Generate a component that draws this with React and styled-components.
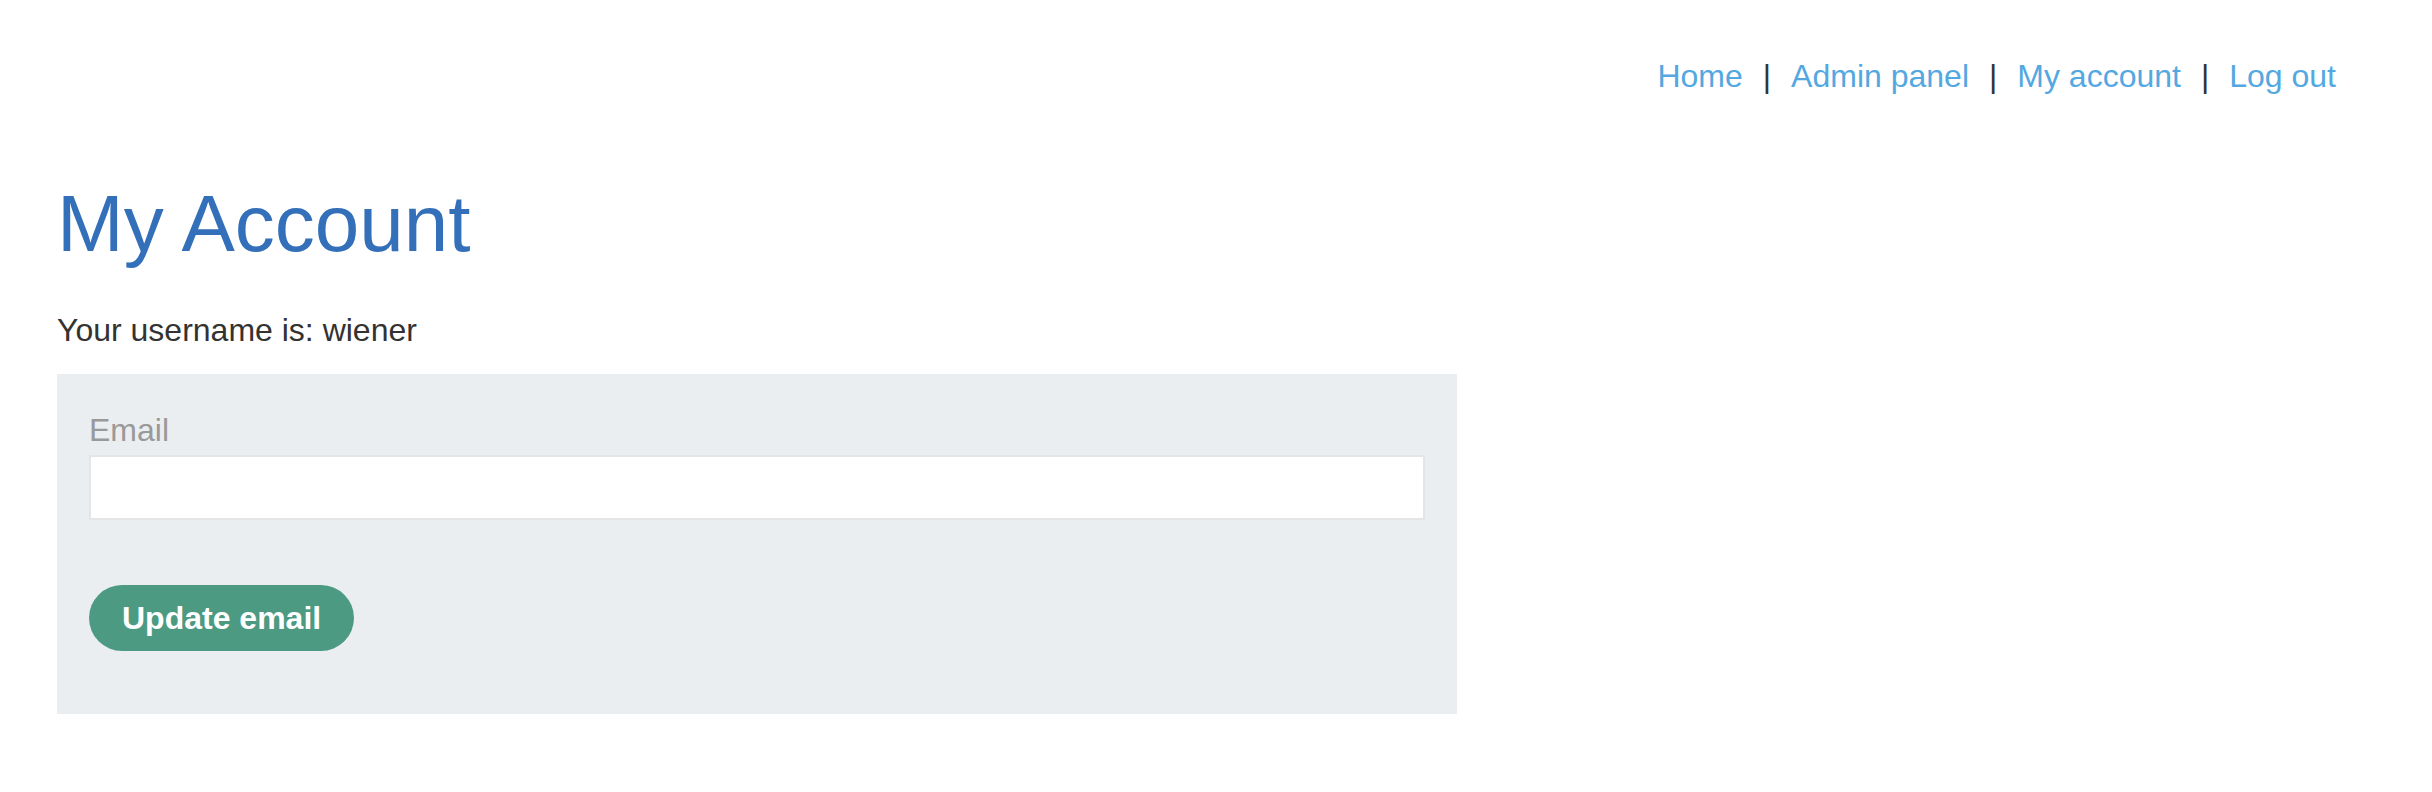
import styled, { createGlobalStyle } from "styled-components";

const GlobalStyle = createGlobalStyle`
    body {
        margin: 0;
        background: #fff;
        font-family: "Liberation Sans", Arial, sans-serif;
        color: #333332;
    }
`

const Page = styled.div`
    padding: 58px 96px 80px 57px;
`

const Nav = styled.nav`
    display: flex;
    justify-content: flex-end;
    align-items: baseline;
    font-size: 32px;
    line-height: 1.15;
`

const NavLink = styled.a`
    color: #54a8e2;
    text-decoration: none;
`

const Sep = styled.span`
    color: #333332;
    margin: 0 20px;
`

const Title = styled.h1`
    margin: 89px 0 0;
    font-size: 80px;
    line-height: 1;
    font-weight: 400;
    color: #3370b9;
`

const Info = styled.p`
    margin: 48px 0 0;
    font-size: 32px;
    line-height: 1.15;
`

const Form = styled.form`
    box-sizing: border-box;
    width: 1400px;
    margin: 25px 0 0;
    padding: 38px 32px 63px 32px;
    background: #ebeef1;
    display: flex;
    flex-direction: column;
    align-items: flex-start;
`

const Label = styled.label`
    font-size: 32px;
    line-height: 1.15;
    color: #999999;
`

const Input = styled.input`
    box-sizing: border-box;
    width: 100%;
    height: 65px;
    margin-top: 7px;
    border: 2px solid #e4e5e6;
    background: #fff;
    font-size: 32px;
    padding: 0 12px;
    outline: none;
`

const Button = styled.button`
    margin-top: 65px;
    height: 66px;
    padding: 0 33px;
    border: none;
    border-radius: 33px;
    background: #4c9a82;
    color: #fff;
    font-family: "Liberation Sans", Arial, sans-serif;
    font-size: 32px;
    font-weight: 700;
    cursor: pointer;
`

const links = ["Home", "Admin panel", "My account", "Log out"];

const App = () => {
    return (
        <Page>
            <GlobalStyle />
            <Nav>
                {links.map((l, i) => (
                    <span key={l}>
                        {i > 0 && <Sep>|</Sep>}
                        <NavLink href="#">{l}</NavLink>
                    </span>
                ))}
            </Nav>
            <Title>My Account</Title>
            <Info>Your username is: wiener</Info>
            <Form onSubmit={(e) => e.preventDefault()}>
                <Label>Email</Label>
                <Input type="email" />
                <Button type="submit">Update email</Button>
            </Form>
        </Page>
    );
};

export default App;
